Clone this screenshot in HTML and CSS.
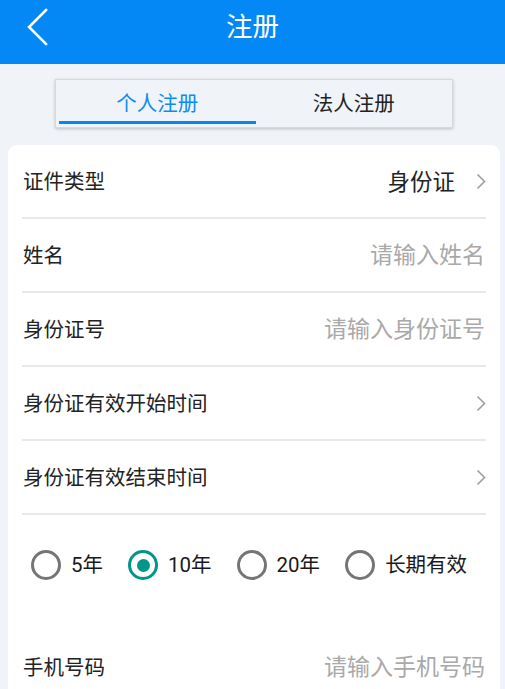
FILE: index.html
```html
<!DOCTYPE html>
<html lang="zh-CN">
<head>
<meta charset="utf-8">
<title>注册</title>
<link rel="stylesheet" href="styles.css">
</head>
<body>
<header class="topbar">
  <div class="topbar-side">
    <svg class="back" width="24" height="38" viewBox="0 0 24 38" aria-hidden="true">
      <path d="M20 2 L3 19 L20 36" fill="none" stroke="#fff" stroke-width="2.6" stroke-linecap="square"/>
    </svg>
  </div>
  <h1 class="title">注册</h1>
  <div class="topbar-side"></div>
</header>

<div class="tabs">
  <div class="tab active"><span class="tab-text">个人注册</span><span class="tab-bar"></span></div>
  <div class="tab"><span class="tab-text">法人注册</span><span class="tab-bar"></span></div>
</div>

<main class="card">
  <div class="row">
    <span class="label">证件类型</span>
    <span class="value">身份证</span>
    <svg class="chev" width="10" height="17" viewBox="0 0 10 17" aria-hidden="true"><path d="M1.5 1.5 L8.5 8.5 L1.5 15.5" fill="none" stroke="#9e9e9e" stroke-width="1.6"/></svg>
  </div>
  <div class="row">
    <span class="label">姓名</span>
    <span class="placeholder">请输入姓名</span>
  </div>
  <div class="row">
    <span class="label">身份证号</span>
    <span class="placeholder">请输入身份证号</span>
  </div>
  <div class="row">
    <span class="label">身份证有效开始时间</span>
    <svg class="chev" width="10" height="17" viewBox="0 0 10 17" aria-hidden="true"><path d="M1.5 1.5 L8.5 8.5 L1.5 15.5" fill="none" stroke="#9e9e9e" stroke-width="1.6"/></svg>
  </div>
  <div class="row">
    <span class="label">身份证有效结束时间</span>
    <svg class="chev" width="10" height="17" viewBox="0 0 10 17" aria-hidden="true"><path d="M1.5 1.5 L8.5 8.5 L1.5 15.5" fill="none" stroke="#9e9e9e" stroke-width="1.6"/></svg>
  </div>
  <div class="radios">
    <label class="opt"><span class="radio"></span><span class="opt-text">5年</span></label>
    <label class="opt"><span class="radio checked"></span><span class="opt-text">10年</span></label>
    <label class="opt"><span class="radio"></span><span class="opt-text">20年</span></label>
    <label class="opt"><span class="radio"></span><span class="opt-text">长期有效</span></label>
  </div>
  <div class="row last">
    <span class="label">手机号码</span>
    <span class="placeholder">请输入手机号码</span>
  </div>
</main>
</body>
</html>
```

FILE: styles.css
```css
* { box-sizing: border-box; }
html, body { margin: 0; padding: 0; }
body {
  background: #f0f4f9;
  font-family: Roboto, "Noto Sans CJK SC", sans-serif;
  color: #212121;
  width: 505px;
  height: 689px;
  overflow: hidden;
}
.topbar {
  height: 64px;
  background: #0388f5;
  display: grid;
  grid-template-columns: 1fr auto 1fr;
  align-items: center;
  padding-bottom: 10px;
}
.topbar-side { display: flex; align-items: center; }
.back { margin-left: 26px; display: block; }
.title {
  margin: 0;
  font-size: 26.5px;
  line-height: 26px;
  font-weight: 400;
  color: #fff;
}
.tabs {
  width: 398px;
  height: 49px;
  margin: 15px 0 0 55px;
  border: 1px solid #d6d9dd;
  box-shadow: 0 1px 3px rgba(0,0,0,0.22);
  background: #f0f4f9;
  display: flex;
}
.tab {
  flex: 1;
  display: flex;
  flex-direction: column;
  align-items: center;
  padding: 14px 0 3px 3px;
}
.tab + .tab { padding-left: 0; }
.tab-text {
  font-size: 20.5px;
  line-height: 21px;
  color: #222;
}
.tab-bar {
  margin-top: auto;
  width: 100%;
  height: 3px;
}
.tab.active .tab-text { color: #0a8cf2; }
.tab.active .tab-bar { background: #0388f5; }

.card {
  margin: 17px 5px 0 8px;
  background: #fff;
  border-radius: 9px 9px 0 0;
  padding: 0 14px;
  height: 560px;
}
.row {
  height: 74px;
  display: flex;
  align-items: center;
  border-bottom: 2px solid #e9e9e9;
  padding: 1px 0 0 1px;
}
.row.last { border-bottom: none; height: 72px; }
.label {
  font-size: 20.5px;
  line-height: 22px;
  color: #222;
}
.value {
  margin-left: auto;
  font-size: 22.5px;
  line-height: 24px;
  color: #222;
  margin-right: 21px;
}
.placeholder {
  margin-left: auto;
  font-size: 23px;
  line-height: 24px;
  color: #a9a9a9;
  margin-right: 1px;
}
.chev { margin-left: auto; display: block; flex: none; }
.value + .chev { margin-left: 0; }

.radios {
  height: 116px;
  display: flex;
  align-items: flex-start;
  padding: 35px 0 0 9px;
  gap: 25px;
}
.opt {
  display: flex;
  align-items: center;
}
.radio {
  width: 30px;
  height: 30px;
  border: 3px solid #757575;
  border-radius: 50%;
  display: flex;
  align-items: center;
  justify-content: center;
  flex: none;
}
.radio.checked { border-color: #009688; }
.radio.checked::after {
  content: "";
  width: 13px;
  height: 13px;
  border-radius: 50%;
  background: #009688;
}
.opt-text {
  margin-left: 10px;
  font-size: 20.5px;
  line-height: 22px;
  color: #1a1a1a;
}
```
